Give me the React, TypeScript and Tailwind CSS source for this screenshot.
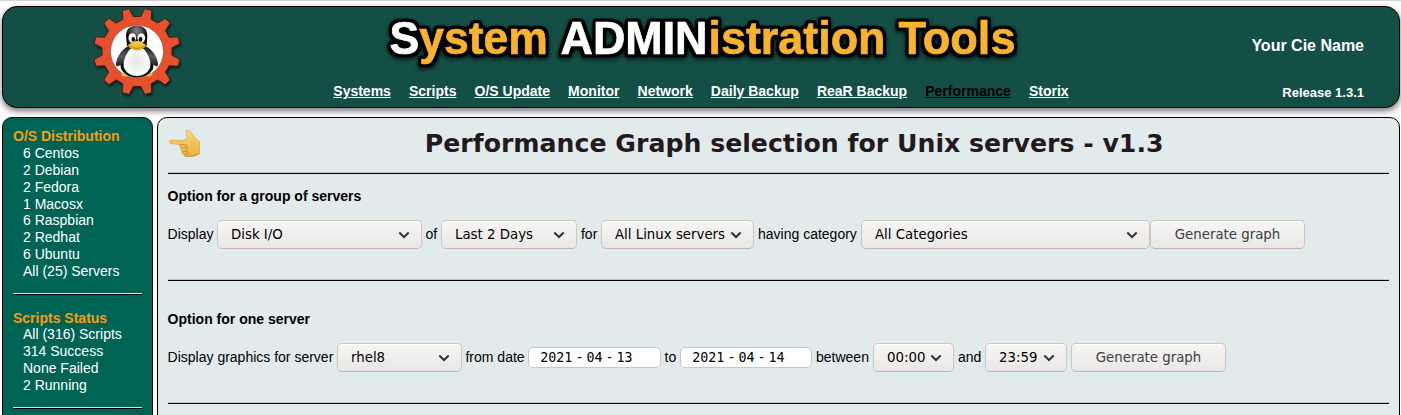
import React from "react";

function gearPath(cx: number, cy: number, root: number, outer: number, teeth: number) {
  const step = 360 / teeth;
  const at = (r: number, deg: number) => {
    const a = (deg * Math.PI) / 180;
    return `${(cx + r * Math.sin(a)).toFixed(2)} ${(cy - r * Math.cos(a)).toFixed(2)}`;
  };
  const points: string[] = [];
  for (let i = 0; i < teeth; i++) {
    const mid = step / 2 + i * step;
    points.push(at(root, mid - 8.8), at(outer - 0.8, mid - 5), at(outer, mid - 3.8), at(outer, mid + 3.8), at(outer - 0.8, mid + 5), at(root, mid + 8.8));
  }
  return `M${points.join("L")}Z`;
}

function Logo() {
  return (
    <svg className="block h-[98px] w-[98px] drop-shadow-[1px_2px_1px_rgba(0,0,0,0.55)]" viewBox="0 0 98 98">
      <defs>
        <radialGradient id="head" cx="0.5" cy="0.22" r="0.5">
          <stop offset="0" stopColor="#8a8a8a" />
          <stop offset="1" stopColor="#0b0b0b" />
        </radialGradient>
        <linearGradient id="wing" x1="0" y1="0" x2="0" y2="1">
          <stop offset="0" stopColor="#151515" />
          <stop offset="0.5" stopColor="#5c5c5c" />
          <stop offset="1" stopColor="#1a1a1a" />
        </linearGradient>
        <radialGradient id="belly">
          <stop offset="0" stopColor="#e4e4e4" />
          <stop offset="1" stopColor="#fdfdfd" />
        </radialGradient>
        <linearGradient id="beak" x1="0" y1="0" x2="0" y2="1">
          <stop offset="0" stopColor="#f9d84a" />
          <stop offset="1" stopColor="#e0a400" />
        </linearGradient>
      </defs>
      <path d={gearPath(49, 48.5, 35.2, 43.6, 12)} fill="#e84f2c" stroke="#2a221b" strokeWidth="0.9" strokeLinejoin="round" />
      <circle cx="49" cy="48.500" r="26.5" fill="#fff" stroke="#8d4a38" strokeWidth="0.7" />
      <ellipse cx="38.5" cy="71.500" rx="5" ry="2" fill="#e6b93b" />
      <ellipse cx="59.500" cy="71.500" rx="5" ry="2" fill="#e6b93b" />
      <path d="M39 44C33 53 31 61 33.500 67Q39 74.500 49 74.500T64.500 67C67 61 64 53 59 44Z" fill="#080808" />
      <path d="M41 43C36 45 31 50 28.700 57Q27 63 29.500 63.500Q38 60 42 50Z" fill="url(#wing)" />
      <path d="M57 43C62 45 67 50 69.300 57Q71 63 68.500 63.500Q60 60 56 50Z" fill="url(#wing)" />
      <path d="M42 46C37 53 34.500 59 36 65Q40 73 49 73T62 65C63.500 59 61 53 56 46Z" fill="url(#belly)" />
      <path d="M38 33C38 26 42 22.500 48.700 22.500S59.300 26 59.300 33L58.700 43Q49 47 39 43Z" fill="url(#head)" />
      <ellipse cx="44.300" cy="35" rx="3.800" ry="4.800" fill="#fff" />
      <ellipse cx="53.300" cy="35" rx="3.800" ry="4.800" fill="#fff" />
      <ellipse cx="45.300" cy="36.300" rx="1.800" ry="2.500" fill="#080808" />
      <ellipse cx="52.500" cy="36.300" rx="1.800" ry="2.500" fill="#080808" />
      <path d="M40 42Q44 38.500 49 38Q54 38.500 58 42Q57.500 46 49 47.600Q40.500 46 40 42Z" fill="url(#beak)" />
      <path d="M41 42.500Q49 48.500 57 42.500" fill="none" stroke="#b98408" strokeWidth="0.7" />
    </svg>
  );
}

function Banner() {
  return (
    <svg className="block h-[62px] w-[644px] [filter:drop-shadow(0_2px_2px_rgba(0,0,0,0.7))]" viewBox="0 0 644 62" role="img">
      <defs>
        <filter id="outline" filterUnits="userSpaceOnUse" x="0" y="0" width="644" height="62" colorInterpolationFilters="sRGB">
          <feMorphology in="SourceAlpha" operator="dilate" radius="2" />
          <feGaussianBlur stdDeviation="1.2" />
          <feComponentTransfer result="edge">
            <feFuncA type="linear" slope="4" intercept="-0.2" />
          </feComponentTransfer>
          <feMerge>
            <feMergeNode in="edge" />
            <feMergeNode in="SourceGraphic" />
          </feMerge>
        </filter>
      </defs>
      <g className="font-['Liberation_Sans',Arial,sans-serif] text-[46.5px] font-bold" strokeWidth="0.7" strokeLinejoin="round" filter="url(#outline)">
        <text x="7.500" y="45.500" textLength="158.500" lengthAdjust="spacingAndGlyphs" fill="#f9b22c" stroke="#f9b22c"><tspan fill="#fff" stroke="#fff">S</tspan>ystem</text>
        <text x="178.500" y="45.500" textLength="147" lengthAdjust="spacingAndGlyphs" fill="#fff" stroke="#fff">ADMIN</text>
        <text x="326.500" y="45.500" textLength="177" lengthAdjust="spacingAndGlyphs" fill="#f9b22c" stroke="#f9b22c">istration</text>
        <text x="516.500" y="45.500" textLength="117" lengthAdjust="spacingAndGlyphs" fill="#f9b22c" stroke="#f9b22c">Tools</text>
      </g>
    </svg>
  );
}

const links = ["Systems", "Scripts", "O/S Update", "Monitor", "Network", "Daily Backup", "ReaR Backup", "Performance", "Storix"];

function Header() {
  return (
    <header className="ml-[2px] mt-[5px] flex h-[102px] w-[1398px] shrink-0 rounded-[15px] border border-black bg-[#144f45] shadow-[0_3px_6px_rgba(0,0,0,0.55)]">
      <div className="w-[320px] pl-[85px]">
        <div className="-mt-[4px]"><Logo /></div>
      </div>
      <div className="flex w-[760px] flex-col">
        <div className="ml-[59px] mt-[1px]"><Banner /></div>
        <nav className="mt-[13px] flex gap-[18.1px] whitespace-nowrap pl-[10.3px] text-[14px] font-bold leading-[17px]">
          {links.map((l) => (
            <a key={l} href="#" className={l === "Performance" ? "text-black underline" : "text-white underline"}>{l}</a>
          ))}
        </nav>
      </div>
      <div className="flex flex-1 flex-col items-end pr-[35px] font-bold text-white">
        <div className="mt-[29px] text-[16px] leading-[20px]">Your Cie Name</div>
        <div className="mt-[29px] text-[13px] leading-[16px]">Release 1.3.1</div>
      </div>
    </header>
  );
}

function SideGroup({ title, items }: { title: string; items: string[] }) {
  return (
    <div className="leading-[16.8px]">
      <div className="font-bold text-[#f79c0c]">{title}</div>
      <div className="pl-[10px] text-white">
        {items.map((i) => <div key={i}>{i}</div>)}
      </div>
    </div>
  );
}

function SideRule() {
  return <div className="mr-[10px] h-[2px] border-b border-t border-b-black border-t-[#dfe8e6]" />;
}

function Rule() {
  return <div className="h-[2px] border-b border-t border-b-black border-t-[#c4c6c6]" />;
}

function Chevron() {
  return (
    <svg className="block h-[8px] w-[12px] shrink-0" viewBox="0 0 12 8" fill="none" stroke="#2e3436" strokeWidth="2">
      <path d="M1.300 1.500L6 6L10.700 1.500" />
    </svg>
  );
}

const control = "flex h-[29px] shrink-0 items-center rounded-[5px] border border-[#cdc7c2] border-b-[#bfb8b1] bg-gradient-to-b from-[#f6f5f4] to-[#eae8e6] font-['DejaVu_Sans',sans-serif] text-[13.33px] shadow-[inset_0_1px_0_#fff]";

function Select({ value, width }: { value: string; width: string }) {
  return (
    <div role="combobox" className={`${control} ${width} justify-between pl-[13px] pr-[11px] text-black`}>
      <span>{value}</span>
      <Chevron />
    </div>
  );
}

function GenerateButton() {
  return <button className={`${control} w-[155px] justify-center text-[#3b4042]`}>Generate graph</button>;
}

function DateField({ parts, width }: { parts: string[]; width: string }) {
  return (
    <div className={`${width} flex h-[21px] shrink-0 items-center rounded-[5px] border border-[#cdc7c2] bg-white pl-[11.3px] font-['DejaVu_Sans_Mono',monospace] text-[13.33px] leading-[19px] text-black`}>
      <span>{parts[0]}</span>
      <span className="w-[14px] text-center">-</span>
      <span>{parts[1]}</span>
      <span className="w-[14px] text-center">-</span>
      <span>{parts[2]}</span>
    </div>
  );
}

function Label({ children, width }: { children: string; width: string }) {
  return <span className={`${width} shrink-0`}>{children}</span>;
}

function Hand() {
  return (
    <svg className="block h-[32px] w-[34px]" viewBox="0 0 34 32">
      <defs>
        <linearGradient id="skin" x1="0" y1="0" x2="0" y2="1">
          <stop offset="0" stopColor="#f8d878" />
          <stop offset="1" stopColor="#ebb13c" />
        </linearGradient>
      </defs>
      <path d="M2.500 12Q0.500 13 1.500 14.500Q2 15.500 4 15.600L12 16.800Q11 18.500 12.900 20Q12.200 22.300 14.200 23.800Q13.800 26 16 26.500Q16 28.600 19 28.500L25 28.300Q28 27.500 31.500 25.500V13.500Q28.500 12.500 26 8.500Q23.500 4 20 2.200Q17.800 1.800 18 4.500L19.500 9.500Q18.500 11.500 16 12.500Z" fill="url(#skin)" stroke="#d39b32" strokeWidth="0.6" />
      <path d="M12 16.800H17Q19.500 17.200 18.500 19M12.900 20L18 19.600Q20.500 20.300 19 22.600M14.200 23.800L19 23.200Q21 23.700 19.600 25.800M16 26.500L20 26" fill="none" stroke="#c98b2a" strokeWidth="0.9" />
      <path d="M17 28.600Q24 29.200 31.500 25.800" fill="none" stroke="#c08a32" strokeWidth="0.8" />
    </svg>
  );
}

export default function App() {
  return (
    <div className="flex h-[415px] w-[1401px] flex-col overflow-hidden border-t border-[#d5d3d6] bg-white font-['Liberation_Sans',Arial,sans-serif] text-[14px] text-black">
      <Header />
      <div className="ml-[2px] mt-[9px] flex flex-1 gap-[4px]">
        <aside className="h-[320px] w-[151px] shrink-0 rounded-[10px] border border-black bg-[#006455] pl-[10px] pt-[10.4px]">
          <SideGroup title="O/S Distribution" items={["6 Centos", "2 Debian", "2 Fedora", "1 Macosx", "6 Raspbian", "2 Redhat", "6 Ubuntu", "All (25) Servers"]} />
          <div className="mt-[13.6px]"><SideRule /></div>
          <div className="mt-[14.4px]"><SideGroup title="Scripts Status" items={["All (316) Scripts", "314 Success", "None Failed", "2 Running"]} /></div>
          <div className="mt-[13.6px]"><SideRule /></div>
        </aside>
        <main className="h-[320px] w-[1243px] shrink-0 rounded-[10px] border border-black bg-[#e2ebeb] pl-[9.6px] pr-[10px]">
          <div className="flex h-[54px]">
            <div className="w-[35px] pt-[10px]"><Hand /></div>
            <h1 className="flex-1 whitespace-nowrap pr-[3.4px] pt-[11px] text-center font-['DejaVu_Sans',sans-serif] text-[25.2px] font-bold leading-[30px] text-[#231a1d]">Performance Graph selection for Unix servers - v1.3</h1>
          </div>
          <Rule />
          <h2 className="mt-[14px] font-bold leading-[17px]">Option for a group of servers</h2>
          <div className="mt-[15px] flex items-center whitespace-nowrap">
            <Label width="w-[49.4px]">Display</Label>
            <Select value="Disk I/O" width="w-[205px]" />
            <Label width="w-[19px] pl-[3.6px]">of</Label>
            <Select value="Last 2 Days" width="w-[136px]" />
            <Label width="w-[24px] pl-[4px]">for</Label>
            <Select value="All Linux servers" width="w-[153px]" />
            <Label width="w-[107px] pl-[4px]">having category</Label>
            <Select value="All Categories" width="w-[289px]" />
            <GenerateButton />
          </div>
          <div className="mt-[30px]"><Rule /></div>
          <h2 className="mt-[30px] font-bold leading-[17px]">Option for one server</h2>
          <div className="mt-[15px] flex items-center whitespace-nowrap">
            <Label width="w-[169.4px]">Display graphics for server</Label>
            <Select value="rhel8" width="w-[125px]" />
            <Label width="w-[66px] pl-[3.5px]">from date</Label>
            <DateField parts={["2021", "04", "13"]} width="w-[133px]" />
            <Label width="w-[19px] pl-[3.6px]">to</Label>
            <DateField parts={["2021", "04", "14"]} width="w-[132px]" />
            <Label width="w-[61px] pl-[4px]">between</Label>
            <Select value="00:00" width="w-[81px]" />
            <Label width="w-[31px] pl-[4px]">and</Label>
            <Select value="23:59" width="w-[82px]" />
            <div className="ml-[4px]"><GenerateButton /></div>
          </div>
          <div className="mt-[30px]"><Rule /></div>
        </main>
      </div>
    </div>
  );
}
